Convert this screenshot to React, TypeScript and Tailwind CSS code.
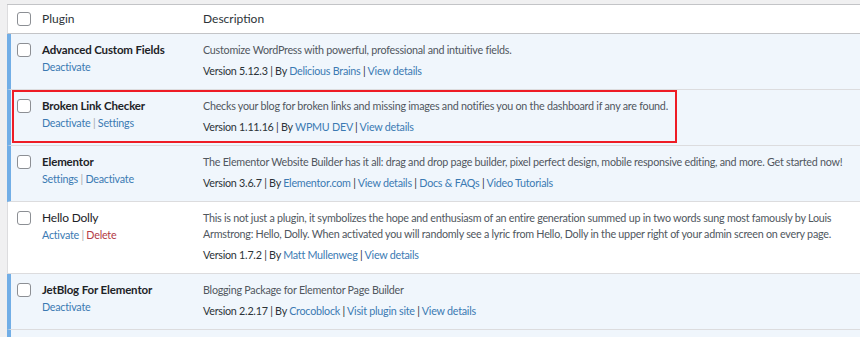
import React from "react";

type Action = { label: string; danger?: boolean };
type Meta = { text: string; link?: boolean };

interface PluginRow {
  name: string;
  active: boolean;
  actions: Action[];
  description: React.ReactNode;
  meta: Meta[];
  highlight?: boolean;
}

const plugins: PluginRow[] = [
  {
    name: "Advanced Custom Fields",
    active: true,
    actions: [{ label: "Deactivate" }],
    description: "Customize WordPress with powerful, professional and intuitive fields.",
    meta: [{ text: "Version 5.12.3" }, { text: "Delicious Brains", link: true }, { text: "View details", link: true }],
  },
  {
    name: "Broken Link Checker",
    active: true,
    highlight: true,
    actions: [{ label: "Deactivate" }, { label: "Settings" }],
    description: "Checks your blog for broken links and missing images and notifies you on the dashboard if any are found.",
    meta: [{ text: "Version 1.11.16" }, { text: "WPMU DEV", link: true }, { text: "View details", link: true }],
  },
  {
    name: "Elementor",
    active: true,
    actions: [{ label: "Settings" }, { label: "Deactivate" }],
    description:
      "The Elementor Website Builder has it all: drag and drop page builder, pixel perfect design, mobile responsive editing, and more. Get started now!",
    meta: [
      { text: "Version 3.6.7" },
      { text: "Elementor.com", link: true },
      { text: "View details", link: true },
      { text: "Docs & FAQs", link: true },
      { text: "Video Tutorials", link: true },
    ],
  },
  {
    name: "Hello Dolly",
    active: false,
    actions: [{ label: "Activate" }, { label: "Delete", danger: true }],
    description: (
      <>
        This is not just a plugin, it symbolizes the hope and enthusiasm of an entire generation summed up in two words sung most famously by Louis
        <br />
        Armstrong: Hello, Dolly. When activated you will randomly see a lyric from Hello, Dolly in the upper right of your admin screen on every page.
      </>
    ),
    meta: [{ text: "Version 1.7.2" }, { text: "Matt Mullenweg", link: true }, { text: "View details", link: true }],
  },
  {
    name: "JetBlog For Elementor",
    active: true,
    actions: [{ label: "Deactivate" }],
    description: "Blogging Package for Elementor Page Builder",
    meta: [
      { text: "Version 2.2.17" },
      { text: "Crocoblock", link: true },
      { text: "Visit plugin site", link: true },
      { text: "View details", link: true },
    ],
  },
];

const Checkbox = () => (
  <span className="block w-[14px] h-[14px] rounded-[3px] border border-[#8c8f94] bg-white" />
);

const MetaLine = ({ meta }: { meta: Meta[] }) => (
  <div className="mt-[5px] leading-4 text-[#2c3338]">
    {meta.map((m, i) => (
      <span key={i}>
        {i === 1 && " | By "}
        {i > 1 && " | "}
        {m.link ? <span className="text-[#3b7ab3]">{m.text}</span> : m.text}
      </span>
    ))}
  </div>
);

const Row = ({ p }: { p: PluginRow }) => (
  <div
    className={`relative flex border-b border-[#dcdcde] ${
      p.active ? "bg-[#f0f6fc] border-l-4 border-l-[#72aee6]" : "bg-white border-l border-l-[#dcdcde]"
    }`}
  >
    <div className={`${p.active ? "w-[31px]" : "w-[34px]"} shrink-0 pt-[9px] ${p.active ? "pl-[6px]" : "pl-[9px]"}`}>
      <Checkbox />
    </div>
    <div className="w-[161px] shrink-0 pt-2 pb-[10px]">
      <div
        className={`leading-4 text-[#1d2327] ${
          p.active ? "font-bold text-[11.5px] tracking-[-0.15px]" : "text-[12px] tracking-[-0.2px]"
        }`}
      >
        {p.name}
      </div>
      <div className="mt-[1px] leading-4 text-[#3b7ab3]">
        {p.actions.map((a, i) => (
          <span key={i}>
            {i > 0 && <span className="text-[#a7aaad]"> | </span>}
            <span className={a.danger ? "text-[#b33a46]" : ""}>{a.label}</span>
          </span>
        ))}
      </div>
    </div>
    <div className="flex-1 pt-2 pb-[10px] text-[#50575e]">
      <div className="leading-4 whitespace-nowrap">{p.description}</div>
      <MetaLine meta={p.meta} />
    </div>
    {/* annotation box drawn over the row */}
    {p.highlight && (
      <div className="absolute left-[1px] top-0 w-[665px] h-[53px] border-2 border-[#ee1c25] pointer-events-none" />
    )}
  </div>
);

export default function App() {
  return (
    <div
      className="w-[860px] h-[337px] overflow-hidden bg-[#f0f0f1] pl-[7px] pt-[4px] text-[10.75px] tracking-[-0.25px]"
      style={{ fontFamily: 'Lato, "Noto Sans", Arial, sans-serif' }}
    >
      <div className="border-t border-[#c3c4c7]">
        <div className="flex h-[29px] items-center bg-white border-l border-[#dcdcde] border-b border-b-[#c3c4c7] text-[#2c3338] text-[12px] tracking-normal">
          <div className="w-[34px] shrink-0 pl-[9px]">
            <Checkbox />
          </div>
          <div className="w-[161px] shrink-0">Plugin</div>
          <div>Description</div>
        </div>
        {plugins.map((p) => (
          <Row key={p.name} p={p} />
        ))}
        <div className="h-[10px] bg-[#f0f6fc] border-l-4 border-l-[#72aee6]" />
      </div>
    </div>
  );
}
